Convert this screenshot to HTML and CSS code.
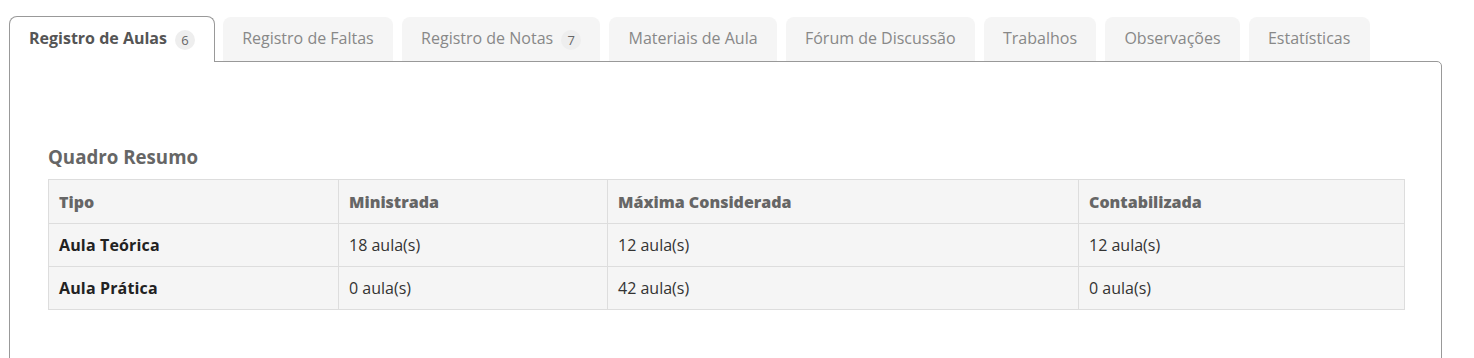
FILE: index.html
```html
<!DOCTYPE html>
<html lang="pt-BR">
<head>
<meta charset="utf-8">
<title>Registro de Aulas</title>
<link rel="stylesheet" href="styles.css">
</head>
<body>
<div class="wrap">
  <ul class="tabs">
    <li class="tab active">Registro de Aulas <span class="badge">6</span></li>
    <li class="tab">Registro de Faltas</li>
    <li class="tab">Registro de Notas <span class="badge">7</span></li>
    <li class="tab">Materiais de Aula</li>
    <li class="tab">Fórum de Discussão</li>
    <li class="tab">Trabalhos</li>
    <li class="tab">Observações</li>
    <li class="tab">Estatísticas</li>
  </ul>
  <div class="panel">
    <h3 class="title">Quadro Resumo</h3>
    <table class="summary">
      <colgroup>
        <col class="c1"><col class="c2"><col class="c3"><col class="c4">
      </colgroup>
      <thead>
        <tr><th>Tipo</th><th>Ministrada</th><th>Máxima Considerada</th><th>Contabilizada</th></tr>
      </thead>
      <tbody>
        <tr><td class="label">Aula Teórica</td><td>18 aula(s)</td><td>12 aula(s)</td><td>12 aula(s)</td></tr>
        <tr><td class="label">Aula Prática</td><td>0 aula(s)</td><td>42 aula(s)</td><td>0 aula(s)</td></tr>
      </tbody>
    </table>
  </div>
</div>
</body>
</html>
```

FILE: styles.css
```css
* { box-sizing: border-box; }
html, body { margin: 0; padding: 0; background: #fff; }
body {
  font-family: "Open Sans", "Liberation Sans", sans-serif;
  color: #333;
}
.wrap {
  padding: 16px 0 0 9px;
  width: 1442px;
}
.tabs {
  list-style: none;
  margin: 0;
  padding: 0;
  display: flex;
  align-items: flex-end;
  gap: 9px;
  position: relative;
  z-index: 1;
}
.tab {
  background: #f5f5f5;
  color: #888;
  font-size: 16px;
  line-height: 23px;
  padding: 10px 19.2px 11px;
  border-radius: 8px 8px 0 0;
  white-space: nowrap;
  display: flex;
  align-items: center;
}
.tab.active {
  background: #fff;
  color: #555;
  font-weight: 700;
  border: 1px solid #999;
  border-bottom: none;
  padding: 10px 19px 12px 19px;
  margin-bottom: -1px;
  margin-right: -1px;
}
.badge {
  display: inline-block;
  min-width: 20px;
  height: 20px;
  line-height: 20px;
  border-radius: 10px;
  background: #eee;
  color: #666;
  font-size: 13px;
  font-weight: 400;
  text-align: center;
  margin-left: 8px;
  margin-top: 2px;
}
.panel {
  border: 1px solid #999;
  border-radius: 0 5px 0 0;
  min-height: 320px;
  padding: 83px 36px 0 38px;
}
.title {
  margin: 0 0 10px;
  font-size: 18.7px;
  line-height: 24px;
  font-weight: 700;
  color: #666;
}
.summary {
  width: 100%;
  border-collapse: collapse;
  font-size: 16px;
}
.summary col.c1 { width: 290px; }
.summary col.c2 { width: 269px; }
.summary col.c3 { width: 471px; }
.summary th, .summary td {
  background: #f5f5f5;
  border: 1px solid #ddd;
  text-align: left;
  padding: 0 10px;
  height: 43px;
  vertical-align: middle;
}
.summary th {
  color: #666;
  font-weight: 800;
  height: 44px;
}
.summary td { color: #333; }
.summary td.label { font-weight: 700; color: #222; letter-spacing: 0.15px; }
```
